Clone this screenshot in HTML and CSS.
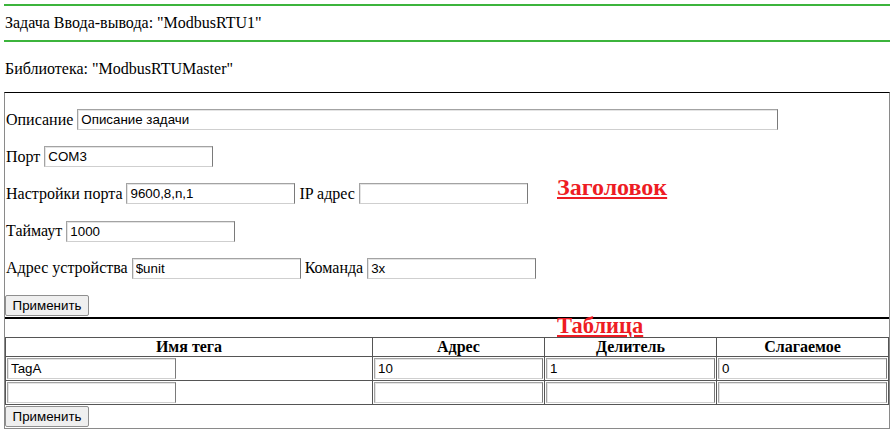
FILE: index.html
```html
<!DOCTYPE html>
<html lang="ru">
<head>
    <meta charset="UTF-8">
    <title>Задача Ввода-вывода</title>
    <link rel="stylesheet" href="styles.css">
</head>
<body>
    <div class="rule"></div>
    <div class="task-title">Задача Ввода-вывода: "ModbusRTU1"</div>
    <div class="rule"></div>
    <div class="lib-title">Библиотека: "ModbusRTUMaster"</div>

    <div class="task-box">
        <!-- Header settings -->
        <div class="header-section">
            <span class="tag-label tag-header">Заголовок</span>
            <div class="field-row">
                <label>Описание</label>
                <input type="text" class="txt txt-wide" value="Описание задачи">
            </div>
            <div class="field-row">
                <label>Порт</label>
                <input type="text" class="txt" value="COM3">
            </div>
            <div class="field-row">
                <label>Настройки порта</label>
                <input type="text" class="txt" value="9600,8,n,1">
                <label>IP адрес</label>
                <input type="text" class="txt" value="">
            </div>
            <div class="field-row">
                <label>Таймаут</label>
                <input type="text" class="txt" value="1000">
            </div>
            <div class="field-row">
                <label>Адрес устройства</label>
                <input type="text" class="txt" value="$unit">
                <label>Команда</label>
                <input type="text" class="txt" value="3x">
            </div>
            <div class="btn-row">
                <button type="button" class="apply-btn">Применить</button>
            </div>
        </div>

        <!-- Tags table -->
        <div class="table-section">
            <span class="tag-label tag-table">Таблица</span>
            <table class="tags">
                <thead>
                    <tr>
                        <th>Имя тега</th>
                        <th class="col-num">Адрес</th>
                        <th class="col-num">Делитель</th>
                        <th class="col-num">Слагаемое</th>
                    </tr>
                </thead>
                <tbody>
                    <tr>
                        <td><input type="text" class="txt" value="TagA"></td>
                        <td><input type="text" class="txt txt-fill" value="10"></td>
                        <td><input type="text" class="txt txt-fill" value="1"></td>
                        <td><input type="text" class="txt txt-fill" value="0"></td>
                    </tr>
                    <tr>
                        <td><input type="text" class="txt" value=""></td>
                        <td><input type="text" class="txt txt-fill" value=""></td>
                        <td><input type="text" class="txt txt-fill" value=""></td>
                        <td><input type="text" class="txt txt-fill" value=""></td>
                    </tr>
                </tbody>
            </table>
            <button type="button" class="apply-btn apply-bottom">Применить</button>
        </div>
    </div>
</body>
</html>
```

FILE: styles.css
```css
body { margin: 0 4px; font-family: "Liberation Serif", "Times New Roman", serif; font-size: 16px; color: #000; background: #fff; }
.rule { height: 2px; background: #3cb43c; }
body > .rule:first-child { margin-top: 4px; }
.task-title { height: 34px; line-height: 34px; padding-left: 1px; }
.lib-title { height: 50px; line-height: 54px; padding-left: 1px; }

.task-box { border: 1px solid #8a8a8a; border-top-color: #000; }
.header-section { position: relative; padding-top: 16px; border-bottom: 2px solid #000; }
.field-row { display: flex; align-items: center; gap: 4px; height: 21px; margin-bottom: 16px; padding-left: 1px; }
.field-row + .field-row { margin-bottom: 16.3px; }
.btn-row { line-height: 0; padding-bottom: 1px; }

.txt { box-sizing: border-box; width: 169px; height: 21px; padding: 1px 3px; border: 1px solid #a3a3a3; border-right-color: #7a7a7a; border-bottom-color: #cfcfcf; box-shadow: inset 1px 1px 0 #e4e4e4; font-family: "Liberation Sans", Arial, sans-serif; font-size: 13.33px; color: #000; background: #fff; }
.txt-wide { width: 701px; }
.txt-fill { width: 100%; }

.apply-btn { box-sizing: border-box; height: 21px; width: 84px; padding: 0 6px; border: 1px solid #8f8f8f; border-radius: 2px; background: #efefef; font-family: "Liberation Sans", Arial, sans-serif; font-size: 13.33px; color: #000; }
.apply-bottom { margin: 1px 0 1px; vertical-align: top; }

.tag-label { position: absolute; left: 552px; color: #ee1c24; font-weight: bold; text-decoration: underline; line-height: 1; }
.tag-header { top: 82px; font-size: 24px; }
.tag-table { top: -4px; font-size: 22.5px; }

.table-section { position: relative; padding-top: 18px; line-height: 0; }
.tags { width: 100%; border-collapse: collapse; line-height: normal; }
.tags th, .tags td { border: 1px solid #555; padding: 1px; }
.tags thead tr { border-top: 1px solid #000; }
.tags th { font-weight: bold; height: 18px; padding: 0 1px; }
.tags .col-num { width: 169px; }
.tags td input { display: block; }
```
